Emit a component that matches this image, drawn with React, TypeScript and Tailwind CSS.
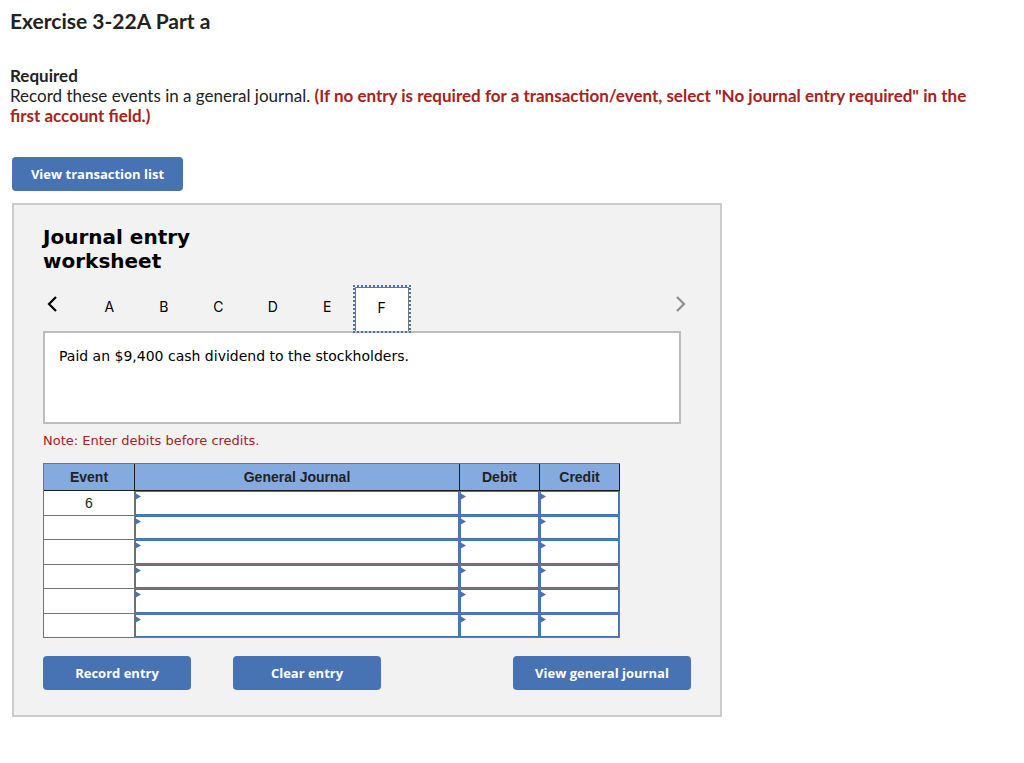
import React from "react";
import clsx from "clsx";

const tabs = ["A", "B", "C", "D", "E", "F"];
const rows = ["6", "", "", "", "", ""];
const fields = ["General Journal", "Debit", "Credit"];

const ActionButton = ({ className, children }: { className?: string; children: React.ReactNode }) => (
  <button
    type="button"
    className={clsx(
      "h-[34px] rounded-sm bg-[#4773b4] font-['Open_Sans',sans-serif] text-[13px] font-bold text-white",
      className
    )}
  >
    {children}
  </button>
);

const Chevron = ({ d }: { d: string }) => (
  <svg width="12" height="18" viewBox="0 0 12 18" fill="none" stroke="currentColor" strokeWidth="2.2">
    <path d={d} />
  </svg>
);

const EntryCell = ({ label }: { label: string }) => (
  <td className="relative border-r border-b border-[#747474] p-0">
    <input
      type="text"
      aria-label={label}
      className="block w-full border border-[#4773b4] bg-white px-2 text-sm outline-none group-odd:h-6 group-even:h-[23px]"
    />
    <svg className="pointer-events-none absolute left-0 top-0.5" width="6" height="7" viewBox="0 0 6 7">
      <path d="M0 0L6 3.5L0 7Z" fill="#4773b4" />
    </svg>
  </td>
);

const Tabs = () => (
  <div className="flex h-11 justify-between">
    <div className="flex">
      <button type="button" aria-label="Previous" className="mt-2 h-[18px] w-[39px] pl-1 text-black">
        <Chevron d="M9 2L2 9L9 16" />
      </button>
      <div role="tablist" className="grid w-[327px] grid-cols-6 font-[Inter,sans-serif] text-sm text-black">
        {tabs.map((tab) => (
          <button
            key={tab}
            type="button"
            role="tab"
            aria-selected={tab === "F"}
            className={clsx(
              "pb-1",
              tab === "F" &&
                "relative border border-b-0 border-[#747474] bg-white outline-2 outline-dotted outline-[#4773b4]"
            )}
          >
            {tab}
          </button>
        ))}
      </div>
    </div>
    <button type="button" aria-label="Next" className="-mr-1.5 mt-2 h-[18px] text-[#8f8f8f]">
      <Chevron d="M2 2L9 9L2 16" />
    </button>
  </div>
);

const JournalTable = () => (
  <table className="mt-3 w-[577px] table-fixed border-separate border-spacing-0 border-t border-l border-[#747474] font-['Liberation_Sans',Arial,sans-serif] text-sm text-[#222]">
    <colgroup>
      <col className="w-[91px]" />
      <col />
      <col className="w-20" />
      <col className="w-20" />
    </colgroup>
    <thead>
      <tr className="h-[27px] bg-[#84aae0]">
        {["Event", ...fields].map((name) => (
          <th key={name} scope="col" className="border-r border-b border-[#1c1c1c] p-0 font-bold">
            {name}
          </th>
        ))}
      </tr>
    </thead>
    <tbody>
      {rows.map((event, i) => (
        <tr key={i} className="group">
          <td className="border-r border-b border-[#747474] bg-white p-0 text-center">{event}</td>
          {fields.map((field) => (
            <EntryCell key={field} label={`${field} line ${i + 1}`} />
          ))}
        </tr>
      ))}
    </tbody>
  </table>
);

const App = () => {
  return (
    <main className="bg-white px-2.5 pt-[7px] pb-11 font-[Lato,sans-serif] text-[17px] leading-5 text-[#222]">
      <h1 className="text-[21px] leading-7 font-bold">Exercise 3-22A Part a</h1>
      <h2 className="mt-[31px] font-bold">Required</h2>
      <p className="pr-6">
        Record these events in a general journal.{" "}
        <strong className="font-bold text-[#a5231c]">
          (If no entry is required for a transaction/event, select "No journal entry required" in the first account
          field.)
        </strong>
      </p>
      <div className="mt-[31px] pl-0.5">
        <ActionButton className="w-[171px]">View transaction list</ActionButton>
        <section className="mt-3 max-w-[710px] border-2 border-[#cccccc] bg-[#f2f2f2] pt-5 pr-[29px] pb-[25px] pl-[29px] font-['DejaVu_Sans',Verdana,sans-serif]">
          <h3 className="w-[200px] text-xl leading-6 font-bold text-black">Journal entry worksheet</h3>
          <div className="mr-[10px] mt-[14px]">
            <Tabs />
            <div className="h-[93px] border-2 border-[#bdbdbd] bg-white px-[14px] py-[13px] text-sm text-black">
              Paid an $9,400 cash dividend to the stockholders.
            </div>
          </div>
          <p className="mt-[7px] text-[13px] leading-5 text-[#a5231c]">Note: Enter debits before credits.</p>
          <JournalTable />
          <div className="mt-[18px] flex">
            <ActionButton className="w-[148px]">Record entry</ActionButton>
            <ActionButton className="ml-[42px] w-[148px]">Clear entry</ActionButton>
            <ActionButton className="ml-auto w-[178px]">View general journal</ActionButton>
          </div>
        </section>
      </div>
    </main>
  );
};

export default App;
